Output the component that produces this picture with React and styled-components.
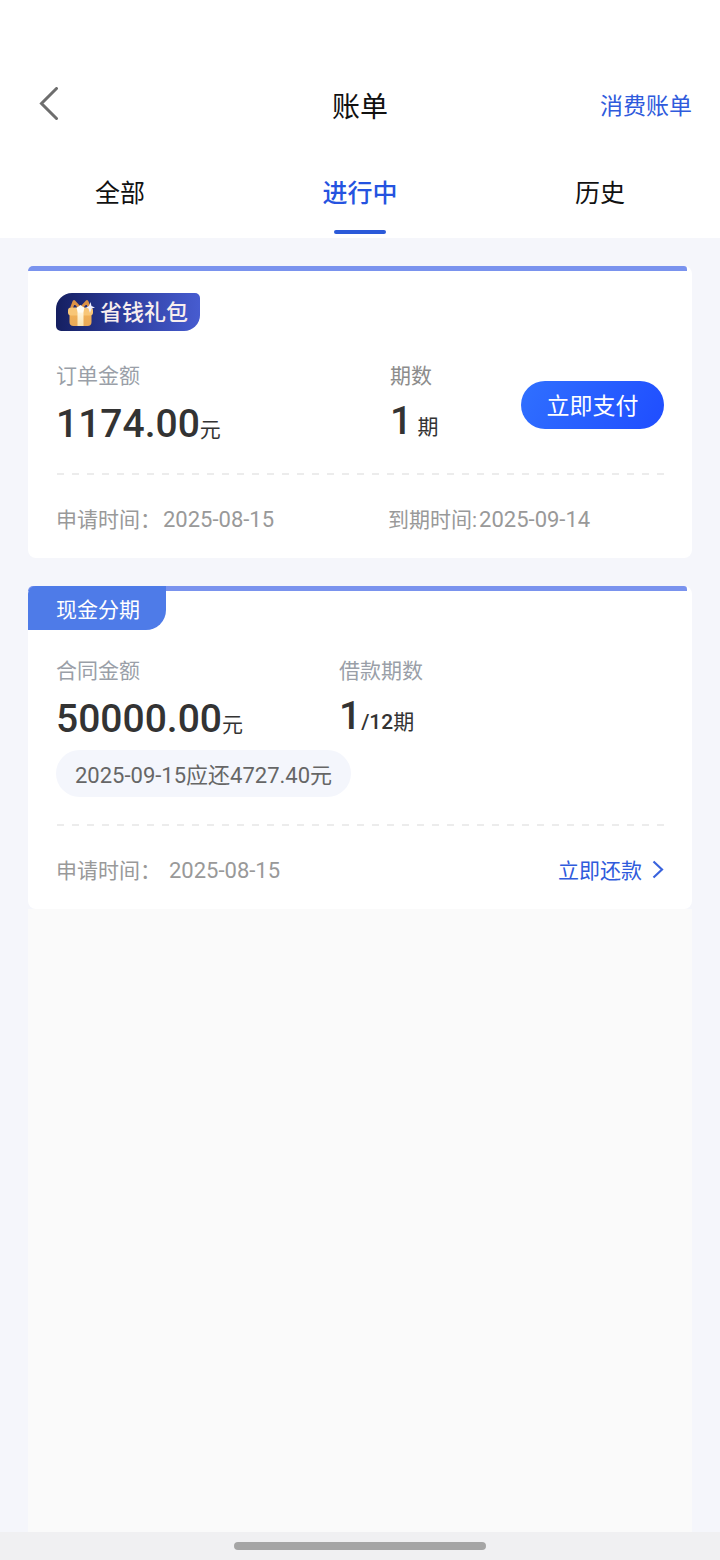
import React from "react";
import styled, { createGlobalStyle } from "styled-components";

const Global = createGlobalStyle`
  * { box-sizing: border-box; }
  body {
    margin: 0;
    background: #f5f6fb;
    font-family: Roboto, "Noto Sans CJK SC", sans-serif;
    color: #333;
  }
  button { font: inherit; border: 0; padding: 0; background: none; cursor: pointer; }
  a { text-decoration: none; }
`;

const Page = styled.div`
  min-height: 100vh;
  display: flex;
  flex-direction: column;
`;

const Header = styled.header`
  background: #fff;
  padding-top: 72px;
`;

const TitleBar = styled.div`
  height: 64px;
  padding: 0 28px;
  display: grid;
  grid-template-columns: 1fr auto 1fr;
  align-items: center;
`;

const BackButton = styled.button`
  justify-self: start;
  width: 42px;
  height: 40px;
  display: flex;
  align-items: center;
  justify-content: center;
`;

const Title = styled.h1`
  margin: 0;
  padding-top: 8px;
  font-size: 28px;
  line-height: 40px;
  font-weight: 400;
  color: #111;
`;

const HeaderLink = styled.a`
  justify-self: end;
  padding-top: 6px;
  font-size: 23px;
  line-height: 32px;
  color: #2f5bdc;
`;

const Tabs = styled.nav`
  display: grid;
  grid-template-columns: repeat(3, 1fr);
  height: 102px;
  padding-top: 38px;
`;

const Tab = styled.button`
  display: flex;
  flex-direction: column;
  align-items: center;
  gap: 16px;
  font-size: 25px;
  line-height: 40px;
  font-weight: ${(p) => (p.$active ? 500 : 400)};
  color: ${(p) => (p.$active ? "#2553e0" : "#111")};

  &::after {
    content: "";
    width: 52px;
    height: 4px;
    border-radius: 2px;
    background: ${(p) => (p.$active ? "#2b5ad9" : "transparent")};
  }
`;

const List = styled.main`
  flex: 1;
  padding: 28px 28px 0;
  display: flex;
  flex-direction: column;
`;

const Card = styled.section`
  background: #fff;
  border-radius: 8px;
  margin-bottom: ${(p) => (p.$last ? 0 : 28)}px;
`;

const Stripe = styled.div`
  height: 5px;
  margin-right: 5px;
  border-radius: 8px 5px 0 0;
  background: #7a93ee;
`;

const CardBody = styled.div`
  padding: ${(p) => p.$top}px 28px 0;
`;

const GiftBadge = styled.div`
  display: flex;
  width: max-content;
  align-items: center;
  gap: 4px;
  height: 38px;
  padding: 2px 12px 0 10px;
  border-radius: 16px 5px 16px 5px;
  background: linear-gradient(90deg, #151f60, #2c3c9c 45%, #475cd0);
  font-size: 22px;
  line-height: 36px;
  font-weight: 500;
  color: #f8eeee;
`;

const CashTag = styled.div`
  width: max-content;
  height: 44px;
  margin-top: -5px;
  position: relative;
  padding: 0 26px 0 28px;
  border-radius: 8px 0 20px 0;
  background: #4e7be8;
  font-size: 21px;
  line-height: 48px;
  color: #fff;
`;

const Amounts = styled.div`
  display: grid;
  grid-template-columns: ${(p) => p.$columns};
  margin-top: ${(p) => p.$gap}px;
`;

const Label = styled.div`
  font-size: 21px;
  line-height: 30px;
  color: ${(p) => (p.$neutral ? "#8c8c8c" : "#9a9fa8")};
`;

const Figure = styled.div`
  height: 47px;
  margin-top: 9px;
  font-size: 21px;
  line-height: ${(p) => (p.$raised ? 42 : 48)}px;
  white-space: pre;
  color: #333;
`;

const Digits = styled.span`
  font-size: 39px;
  font-weight: 500;
`;

const Total = styled.span`
  font-weight: 500;
`;

const PlanRow = styled.div`
  display: flex;
  justify-content: space-between;
  align-items: flex-start;
`;

const PayButton = styled.button`
  width: 143px;
  height: 48px;
  margin-top: 20px;
  padding-top: 4px;
  border-radius: 24px;
  background: linear-gradient(120deg, #3070ff, #1f4dff);
  color: #fff;
  font-size: 23px;
  line-height: 44px;
`;

const DuePill = styled.div`
  width: max-content;
  height: 47px;
  margin-top: 8px;
  padding: 0 19px;
  border-radius: 24px;
  background: #f4f6fc;
  font-size: 22px;
  line-height: 52px;
  color: #666;
`;

const Divider = styled.hr`
  height: 2px;
  margin: ${(p) => p.$gap}px 0 0;
  border: 0;
  background: repeating-linear-gradient(90deg, transparent 0 1px, #ececec 1px 8px, transparent 8px 15px);
`;

const Footer = styled.div`
  display: grid;
  grid-template-columns: ${(p) => p.$columns};
  align-items: center;
  height: 83px;
  padding-top: 7px;
  font-size: 21px;
  line-height: 30px;
  color: #999;
`;

const DateItem = styled.div`
  display: flex;
  align-items: center;
  gap: ${(p) => p.$gap}px;
`;

const DateText = styled.time`
  font-size: 22px;
`;

const RepayLink = styled.a`
  display: flex;
  align-items: center;
  gap: 10px;
  color: #2f5bdc;
`;

const Filler = styled.div`
  flex: 1;
  background: #fafafa;
`;

const HomeBar = styled.div`
  height: 28px;
  display: flex;
  align-items: center;
  justify-content: center;
  background: #f0f0f2;

  &::after {
    content: "";
    width: 35%;
    height: 8px;
    border-radius: 4px;
    background: #a5a5a5;
  }
`;

const BackIcon = () => (
  <svg width="20" height="34" viewBox="0 0 20 34" fill="none" stroke="#6d6d6d" strokeWidth="3" aria-hidden="true">
    <path d="M17.500 1.500 2.500 16.500 17.500 31.500" strokeLinecap="round" />
  </svg>
);

const ChevronIcon = () => (
  <svg width="12" height="22" viewBox="0 0 12 22" fill="none" stroke="#3a63dd" strokeWidth="2.200" aria-hidden="true">
    <path d="M1.500 1.500 10 9.500 1.500 17.500" />
  </svg>
);

const GiftIcon = () => (
  <svg width="30" height="30" viewBox="0 0 30 30" aria-hidden="true">
    <defs>
      <linearGradient id="box" x1="0" y1="0" x2="0" y2="1">
        <stop offset="0" stopColor="#f2b257" />
        <stop offset="1" stopColor="#e9a958" />
      </linearGradient>
      <linearGradient id="ribbon" x1="0" y1="0" x2="0" y2="1">
        <stop offset="0" stopColor="#fffdf5" />
        <stop offset="1" stopColor="#fbe3ad" />
      </linearGradient>
    </defs>
    <path d="M13.500 9.500 8 3.500 5.500 10M15.500 9.500 21 3.500 23.500 10" fill="none" stroke="#dc9145" strokeWidth="2.800" strokeLinejoin="round" />
    <path d="M3.500 14H25.500V24Q25.500 28 21.500 28H7.500Q3.500 28 3.500 24Z" fill="url(#box)" />
    <rect x="2" y="9.500" width="25" height="8" rx="3" fill="#f8c677" />
    <path d="M11.500 9H17.500V28H11.500Z" fill="url(#ribbon)" />
    <path d="M10.500 10 14.500 7 18.500 10 17 14.500H12Z" fill="#fffdf5" />
    <path d="M24.500 4 25.500 8 29 9.500 25.500 10.500 24 15 22.500 10.500 20 9.500 23 8Z" fill="#f1f0ff" />
  </svg>
);

export default function App() {
  return (
    <>
      <Global />
      <Page>
        <Header>
          <TitleBar>
            <BackButton aria-label="返回"><BackIcon /></BackButton>
            <Title>账单</Title>
            <HeaderLink href="#bills">消费账单</HeaderLink>
          </TitleBar>
          <Tabs>
            <Tab>全部</Tab>
            <Tab $active aria-current="page">进行中</Tab>
            <Tab>历史</Tab>
          </Tabs>
        </Header>

        <List>
          <Card>
            <Stripe />
            <CardBody $top={22}>
              <GiftBadge><GiftIcon />省钱礼包</GiftBadge>
              <Amounts $columns="334fr 274fr" $gap={30}>
                <div>
                  <Label>订单金额</Label>
                  <Figure><Digits>1174.00</Digits>元</Figure>
                </div>
                <PlanRow>
                  <div>
                    <Label $neutral>期数</Label>
                    <Figure $raised><Digits>1</Digits> 期</Figure>
                  </div>
                  <PayButton>立即支付</PayButton>
                </PlanRow>
              </Amounts>
              <Divider $gap={26} />
              <Footer $columns="332fr 276fr">
                <DateItem $gap={2}>申请时间：<DateText>2025-08-15</DateText></DateItem>
                <DateItem $gap={2}>到期时间:<DateText>2025-09-14</DateText></DateItem>
              </Footer>
            </CardBody>
          </Card>

          <Card $last>
            <Stripe />
            <CashTag>现金分期</CashTag>
            <CardBody $top={0}>
              <Amounts $columns="283fr 325fr" $gap={26}>
                <div>
                  <Label>合同金额</Label>
                  <Figure><Digits>50000.00</Digits>元</Figure>
                </div>
                <div>
                  <Label>借款期数</Label>
                  <Figure $raised><Digits>1</Digits><Total>/12</Total>期</Figure>
                </div>
              </Amounts>
              <DuePill>2025-09-15应还4727.40元</DuePill>
              <Divider $gap={27} />
              <Footer $columns="1fr auto">
                <DateItem $gap={8}>申请时间：<DateText>2025-08-15</DateText></DateItem>
                <RepayLink href="#repay">立即还款<ChevronIcon /></RepayLink>
              </Footer>
            </CardBody>
          </Card>
          <Filler />
        </List>
        <HomeBar />
      </Page>
    </>
  );
}
